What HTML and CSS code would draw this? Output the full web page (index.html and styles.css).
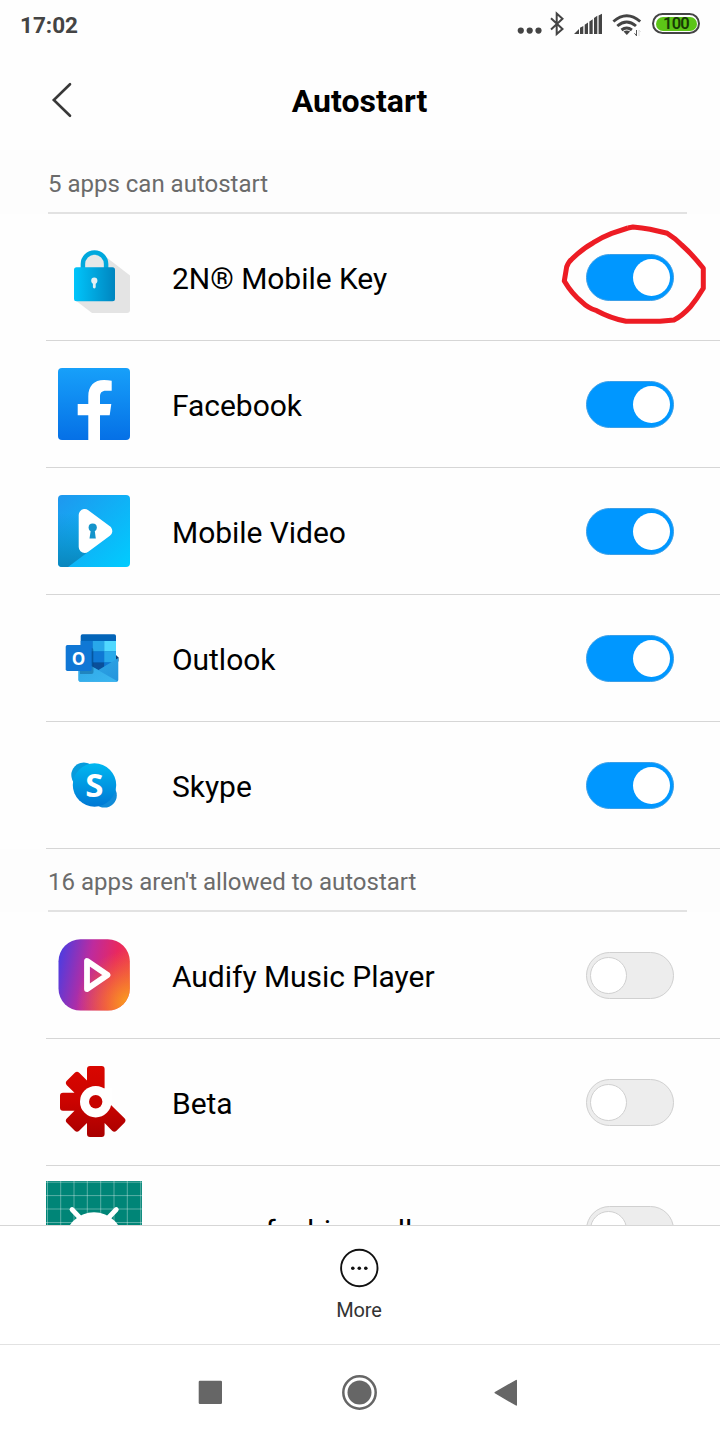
FILE: index.html
```html
<!DOCTYPE html>
<html lang="en">
<head>
<meta charset="utf-8">
<title>Autostart</title>
<link rel="stylesheet" href="styles.css">
</head>
<body>
<div class="screen">
  <header class="status">
    <span class="time">17:02</span>
    <svg class="signals" width="130" height="50" viewBox="512 0 130 50">
      <g fill="#444"><circle cx="520.8" cy="30.6" r="3.1"/><circle cx="529.7" cy="30.6" r="3.1"/><circle cx="538.5" cy="30.6" r="3.1"/></g>
      <path d="M551 18.200l11.500 10.800-5.800 5V13.500l5.800 5.200L551 29.500" fill="none" stroke="#444" stroke-width="2"/>
      <path d="M574 34l5-5v5zM580 27.800l3.300-1.900V34H580zM584.700 24.800l3.300-2.200V34h-3.300zM589.400 21.500l3.300-2.200V34h-3.300zM594 18l3.300-2.200V34H594zM598.600 15.500l3.400-1.800V34h-3.400z" fill="#444"/>
      <g fill="none" stroke="#444" stroke-width="2.900"><path d="M613.400 21.500q13.300-11.500 26.800 0"/><path d="M617.300 26q9.400-8 18.700 0"/><path d="M621.500 30q5.200-4.200 10.400 0"/></g>
      <path d="M623.500 31.600q3.300-2 6.600 0L626.800 35z" fill="#444"/>
      <path d="M636.500 30v6M634.500 33.300l2 2.500" stroke="#555" fill="none"/><path d="M639 36v-6l1.700 2" stroke="#ddd" fill="none"/>
    </svg>
    <span class="battery"><span class="charge">100</span></span>
  </header>
  <div class="titlebar">
    <svg class="back" width="24" height="40" viewBox="50 80 24 40"><path d="M70 84.200L53.800 100 70 115.800" fill="none" stroke="#383838" stroke-width="2.600" stroke-linecap="round"/></svg>
    <h1>Autostart</h1>
  </div>
  <main class="list">
    <h2 class="section"><span>5 apps can autostart</span></h2>
    <div class="row">
      <svg class="icon" viewBox="0 0 96 96">
        <defs><linearGradient id="lock"><stop stop-color="#00c5fb"/><stop offset="1" stop-color="#0085bf"/></linearGradient></defs>
        <path d="M60 28l24 18.500V81q0 3-3 3H46L29 71z" fill="#e4e4e4"/>
        <path d="M36.900 42V35a11.600 11.600 0 0 1 23.200 0v7" fill="#e6e8e8" stroke="#00a8dd" stroke-width="4.500"/>
        <rect x="28" y="38.300" width="41" height="34" rx="2.500" fill="url(#lock)"/>
        <circle cx="48.300" cy="51.700" r="3.100" fill="#e4f0f4"/><path d="M48.300 52v6" stroke="#e4f0f4" stroke-width="2.800" stroke-linecap="round"/>
      </svg>
      <span class="name">2N® Mobile Key</span><span class="toggle on"></span>
      <svg class="marker" width="150" height="104" viewBox="560 223 150 104"><path d="M628 228L633 227Q642 228 650 229.300L667.300 233.300Q675 238 681.700 245Q692 254 703.300 268.300v20Q697 299 690 307.300Q682 316 674 320L660 321.300H626Q610 318 596.700 310.700Q588 308 581.700 301.700Q572 294 564.300 281L566.700 266.700Q569 261 571.700 259.300Q582 249 593.300 242.700Q602 237 611.700 233.300L628 228" fill="none" stroke="#ed1c24" stroke-width="5" stroke-linejoin="round"/></svg>
    </div>
    <div class="row">
      <svg class="icon" viewBox="0 0 96 96">
        <defs><linearGradient id="fb" x2="0" y2="1"><stop stop-color="#17a0fa"/><stop offset="1" stop-color="#0570e6"/></linearGradient></defs>
        <rect x="12" y="12" width="72" height="72" rx="4" fill="url(#fb)"/>
        <path d="M42.300 84V59.300H31.700V48h10.600v-7.500C42.300 30 48 24 58 24q4 0 7.700.8v10H60c-4.500 0-6 2.200-6 6V48h11.300l-1.600 11.300H54V84z" fill="#fff"/>
      </svg>
      <span class="name">Facebook</span><span class="toggle on"></span>
    </div>
    <div class="row">
      <svg class="icon" viewBox="0 0 96 96">
        <defs><linearGradient id="mv" x2="1" y2="1"><stop stop-color="#1f97ee"/><stop offset="1" stop-color="#00ccff"/></linearGradient><linearGradient id="mvs" x1="0" y1="1" x2="0" y2="0"><stop stop-color="#0a86bd"/><stop offset="1" stop-color="#0a86bd" stop-opacity="0"/></linearGradient></defs>
        <rect x="12" y="12" width="72" height="72" rx="4" fill="url(#mv)"/>
        <path d="M12 30L33 30 34 68 42 69 22 84H16q-4 0-4-4z" fill="url(#mvs)"/>
        <path d="M38.700 32v32L60.300 48z" fill="#fff" stroke="#fff" stroke-width="12" stroke-linejoin="round"/>
        <circle cx="46.700" cy="44.500" r="4.100" fill="#1494cb"/><path d="M45 46h3.500l1.300 9.500h-6.300z" fill="#1494cb"/>
      </svg>
      <span class="name">Mobile Video</span><span class="toggle on"></span>
    </div>
    <div class="row">
      <svg class="icon" viewBox="0 0 96 96">
        <defs><linearGradient id="env" x2="1" y2="1"><stop stop-color="#2fa9e8"/><stop offset="1" stop-color="#2494dc"/></linearGradient><linearGradient id="flap" x2="1" y2="1"><stop stop-color="#2ea6e6"/><stop offset="1" stop-color="#3ab6f0"/></linearGradient></defs>
        <path d="M70 45l2.500 2.500v4H68z" fill="#123b6d"/>
        <rect x="34.700" y="24.300" width="35.300" height="38" rx="1.800" fill="#0364b8"/>
        <path d="M34.700 31h12v10.500h-12z" fill="#0f78d4"/><path d="M46.700 31h11.500v10.500H46.700z" fill="#28a8ea"/><path d="M58.200 31H70v10.500H58.200z" fill="#50d9ff"/>
        <path d="M34.700 41.500h12v11h-12z" fill="#0a5aaa"/><path d="M46.700 41.500h11.500v11H46.700z" fill="#0f78d4"/><path d="M58.200 41.500H70v11H58.200z" fill="#28a8ea"/>
        <path d="M46.700 52.500h11.500V62H46.700z" fill="#0a4f9a"/><path d="M58.200 52.500H70V62H58.200z" fill="#0f78d4"/>
        <path d="M32.500 49L52.500 60l19.800-12v22q0 1.700-1.800 1.700H34.200q-1.700 0-1.700-1.700z" fill="url(#env)"/>
        <path d="M32.500 49l39 22.300q-.5.400-1 .4H34.200q-1.700 0-1.700-1.700z" fill="url(#flap)"/>
        <path d="M34 38h11.500q2 0 2 2v22q0 2-2 2H34z" fill="#003b70" opacity=".35"/>
        <rect x="19.700" y="35" width="26" height="26" rx="1.700" fill="#1077d5"/>
        <text class="outlook-o" x="32.600" y="54.500">O</text>
      </svg>
      <span class="name">Outlook</span><span class="toggle on"></span>
    </div>
    <div class="row">
      <svg class="icon" viewBox="0 0 96 96">
        <defs><linearGradient id="sk" x2="0" y2="1"><stop stop-color="#00b7f0"/><stop offset="1" stop-color="#0078d4"/></linearGradient></defs>
        <circle cx="37.800" cy="38" r="12.500" fill="#079bdc"/><circle cx="58.500" cy="58.200" r="12.300" fill="#108bd8"/>
        <circle cx="48.500" cy="48" r="21.700" fill="url(#sk)"/>
        <text class="skype-s" x="48.300" y="59.700">S</text>
      </svg>
      <span class="name">Skype</span><span class="toggle on"></span>
    </div>
    <h2 class="section"><span>16 apps aren't allowed to autostart</span></h2>
    <div class="row">
      <svg class="icon" viewBox="0 0 96 96">
        <defs><linearGradient id="au" y1=".4" x2="1" y2=".6"><stop stop-color="#543bdc"/><stop offset=".4" stop-color="#bd2b9e"/><stop offset=".75" stop-color="#e9285f"/><stop offset="1" stop-color="#f03e4a"/></linearGradient><radialGradient id="auo" cx="1" cy=".9" r=".75"><stop stop-color="#fba21c"/><stop offset="1" stop-color="#f58025" stop-opacity="0"/></radialGradient></defs>
        <rect x="12.500" y="12.300" width="71.300" height="71.300" rx="22" fill="url(#au)"/><rect x="12.500" y="12.300" width="71.300" height="71.300" rx="22" fill="url(#auo)"/>
        <path d="M41 34v28L61.500 48z" fill="none" stroke="#fff" stroke-width="5.800" stroke-linejoin="round"/>
      </svg>
      <span class="name">Audify Music Player</span><span class="toggle"></span>
    </div>
    <div class="row">
      <svg class="icon" viewBox="0 0 96 96">
        <defs><linearGradient id="be" gradientUnits="userSpaceOnUse" x1="0" y1="12" x2="0" y2="83"><stop stop-color="#d90600"/><stop offset=".5" stop-color="#cb0300"/><stop offset="1" stop-color="#a90000"/></linearGradient></defs>
        <path fill="url(#be)" d="M58.600 40V15q0-3-3-3H44q-3 0-3 3v11.500L33.200 18.800q-2.200-2-4.400 0L20.800 26.800q-2 2.200 0 4.400l7.700 7.500H17q-3 0-3 3v12q0 3 3 3h11.500l-7.700 7.700q-2 2.200 0 4.400l8 8q2.200 2 4.400 0L41 69V80q0 3 3 3h11.600q3 0 3-3V69l7.500 7.700q2.200 2 4.400 0l8-8q2-2.200 0-4.400L65 51z"/>
        <circle cx="49.700" cy="47.700" r="15.700" fill="#fff"/><path d="M58.500 34h8v16.500h-8z" fill="#fff"/><circle cx="49.700" cy="47.700" r="6.700" fill="#c70300"/>
      </svg>
      <span class="name">Beta</span><span class="toggle"></span>
    </div>
    <div class="row">
      <svg class="icon" viewBox="0 0 96 96">
        <path d="M0 0h96v96H0z" fill="#008577"/>
        <path d="M1.500 0v96M14.700 0v96M28 0v96M41.300 0v96M54.700 0v96M68 0v96M81.300 0v96M94.700 0v96M0 1.200h96M0 14.600h96M0 28h96M0 41.500h96" stroke="#fff" stroke-opacity=".35" fill="none"/>
        <circle cx="48" cy="60.300" r="29" fill="#fff"/><path d="M26 28.500l10 10.500M70.300 28.500l-10 10.500" stroke="#fff" stroke-width="4.800" stroke-linecap="round"/>
      </svg>
      <span class="name">com.mfashiongallery.emag</span><span class="toggle"></span>
    </div>
  </main>
  <div class="more">
    <svg width="40" height="40" viewBox="339 1248 40 40"><circle cx="359.300" cy="1268" r="18.200" fill="none" stroke="#111" stroke-width="1.900"/><g fill="#111"><circle cx="352.800" cy="1268.300" r="1.800"/><circle cx="359.300" cy="1268.300" r="1.800"/><circle cx="365.800" cy="1268.300" r="1.800"/></g></svg>
    <span>More</span>
  </div>
  <nav class="nav">
    <svg width="40" height="40" viewBox="190 1372 40 40"><rect x="198.700" y="1380.800" width="23.300" height="23.200" rx="1.200" fill="#666"/></svg>
    <svg width="40" height="40" viewBox="338 1372 40 40"><circle cx="359.500" cy="1392.500" r="16.200" fill="none" stroke="#666" stroke-width="2.500"/><circle cx="359.500" cy="1392.500" r="12" fill="#666"/></svg>
    <svg width="40" height="40" viewBox="486 1372 40 40"><path d="M516.300 1380.500v24.500L495.200 1392.700z" fill="#666" stroke="#666" stroke-width="1.400" stroke-linejoin="round"/></svg>
  </nav>
</div>
</body>
</html>
```
FILE: styles.css
```css
* { box-sizing: border-box; }
body { margin: 0; background: #fff; font-family: Roboto, "Liberation Sans", sans-serif; }
.screen { width: 720px; height: 1440px; display: flex; flex-direction: column; overflow: hidden; background: #fefefe; }
.status { height: 50px; display: flex; padding-left: 20px; flex: none; }
.time { font-size: 22.500px; font-weight: 700; line-height: 50px; color: #444; width: 492px; }
.signals { flex: none; }
.battery { width: 48px; height: 21px; margin: 13px 0 0 10px; border: 2px solid #444; border-radius: 11px; padding: 1.500px; }
.charge { display: block; height: 14px; border-radius: 7px; background: #5cc517; color: #173a05; font-size: 16.500px; line-height: 14px; font-weight: 600; letter-spacing: -0.7px; text-align: center; }
.titlebar { height: 100px; flex: none; display: grid; grid-template-columns: 50px 24px 571px 75px; }
.back { grid-column: 2; margin-top: 30px; }
h1 { grid-column: 3; margin: 0; font-size: 32px; line-height: 102px; font-weight: 700; text-align: center; color: #000; }
.list { height: 1075px; flex: none; overflow: hidden; }
.section { height: 63px; margin: 0; padding: 0 33px 0 48px; background: #fdfdfd; font-size: 24px; font-weight: 400; color: #6b6b6b; }
.section:first-child { height: 64px; padding-top: 1px; }
.section span { display: block; height: 63px; line-height: 66px; border-bottom: 2px solid #e2e2e2; }
.row { height: 127px; margin-left: 46px; padding-top: 15px; border-bottom: 1px solid #d6d6d6; display: flex; position: relative; }
.icon { width: 96px; height: 96px; flex: none; }
.name { width: 414px; margin: 25px 0 0 30px; flex: none; font-size: 30px; letter-spacing: -0.04px; line-height: 50px; color: #000; white-space: nowrap; }
.toggle { flex: none; width: 88px; height: 47px; margin-top: 25px; border-radius: 24px; background: #ededed; border: 1px solid #d0d0d0; padding: 4px 3px; display: flex; }
.toggle::after { content: ""; box-sizing: border-box; width: 37px; height: 37px; border-radius: 50%; background: #fff; border: 1px solid #d0d0d0; }
.toggle.on { background: #0097ff; border-color: #3a9fe8; justify-content: flex-end; }
.toggle.on::after { border: 0; }
.marker { position: absolute; left: 514px; top: 9px; }
.outlook-o { font: 700 17px "Open Sans", sans-serif; fill: #fff; text-anchor: middle; }
.skype-s { font: 700 33px "Open Sans", sans-serif; fill: #fff; text-anchor: middle; }
.more { height: 119px; flex: none; border-top: 1px solid #d6d6d6; padding-top: 22px; padding-right: 2px; display: flex; flex-direction: column; align-items: center; background: #fff; }
.more span { font-size: 20px; line-height: 24px; margin-top: 10px; color: #333; letter-spacing: -0.1px; }
.nav { height: 96px; flex: none; border-top: 1px solid #e2e2e2; padding: 27px 194px 0 190px; display: flex; justify-content: space-between; background: #fff; }
```
